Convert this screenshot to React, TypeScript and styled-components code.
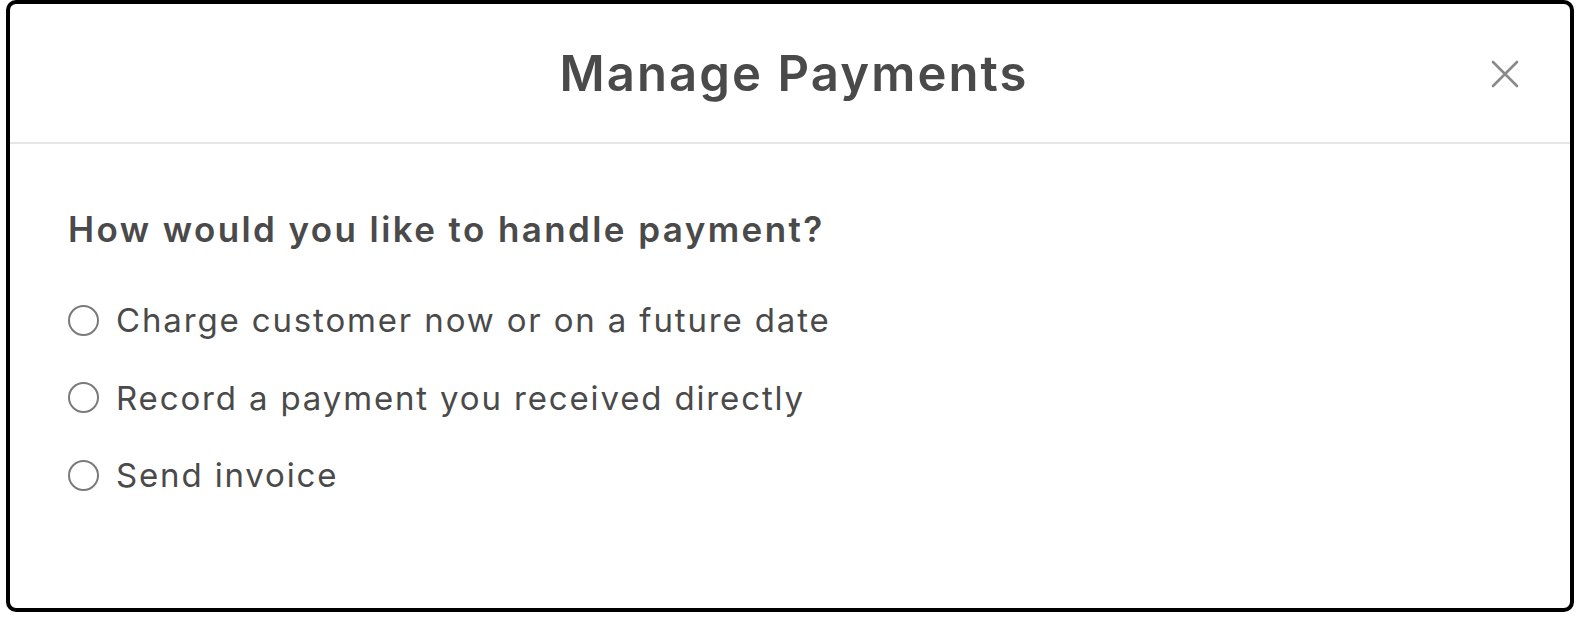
import React from "react";
import styled, { createGlobalStyle } from "styled-components";

const Global = createGlobalStyle`
  html, body { margin: 0; padding: 0; background: #ffffff; }
  body { font-family: Inter, "Open Sans", sans-serif; color: #4a4a4a; }
  * { box-sizing: border-box; }
`;

const Page = styled.div`
  width: 1579px;
  height: 617px;
  padding: 0 5px 5px 6px;
`;

const Dialog = styled.div`
  height: 612px;
  border: 4px solid #000;
  border-radius: 10px;
  background: #fff;
  display: flex;
  flex-direction: column;
  overflow: hidden;
`;

const Header = styled.header`
  height: 140px;
  flex: none;
  display: grid;
  grid-template-columns: 1fr auto 1fr;
  align-items: center;
  border-bottom: 2px solid #e6e6e6;
  padding: 0 47px 0 47px;
`;

const Title = styled.h1`
  grid-column: 2;
  margin: 0 0 0 8px;
  font-size: 49px;
  line-height: 59px;
  font-weight: 600;
  letter-spacing: 2.1px;
  color: #4a4a4a;
`;

const CloseButton = styled.button`
  grid-column: 3;
  justify-self: end;
  width: 36px;
  height: 36px;
  padding: 0;
  margin-top: 2px;
  border: none;
  background: transparent;
  display: flex;
  align-items: center;
  justify-content: center;
  cursor: pointer;
`;

const Body = styled.div`
  padding: 64px 0 0 58px;
`;

const Question = styled.h2`
  margin: 0 0 50px;
  font-size: 35px;
  line-height: 42px;
  font-weight: 600;
  letter-spacing: 2.4px;
  color: #4a4a4a;
`;

const Options = styled.div`
  display: flex;
  flex-direction: column;
  gap: 37.5px;
`;

const Option = styled.label`
  display: flex;
  align-items: center;
  gap: 17px;
  font-size: 33px;
  font-weight: 400;
  letter-spacing: 1.85px;
  color: #4a4a4a;
  height: 40px;
  cursor: pointer;
`;

const Radio = styled.span`
  width: 31px;
  height: 31px;
  border-radius: 50%;
  border: 2px solid #7a7a7a;
  flex: none;
`;

const options = [
  "Charge customer now or on a future date",
  "Record a payment you received directly",
  "Send invoice",
];

export default function App() {
  return (
    <>
      <Global />
      <Page>
        <Dialog>
          <Header>
            <Title>Manage Payments</Title>
            <CloseButton aria-label="Close">
              <svg width="30" height="30" viewBox="0 0 30 30">
                <path d="M3 3 L27 27 M27 3 L3 27" stroke="#8a8a8a" strokeWidth="2.6" strokeLinecap="round" />
              </svg>
            </CloseButton>
          </Header>
          <Body>
            <Question>How would you like to handle payment?</Question>
            <Options>
              {options.map((o) => (
                <Option key={o}>
                  <Radio />
                  {o}
                </Option>
              ))}
            </Options>
          </Body>
        </Dialog>
      </Page>
    </>
  );
}
